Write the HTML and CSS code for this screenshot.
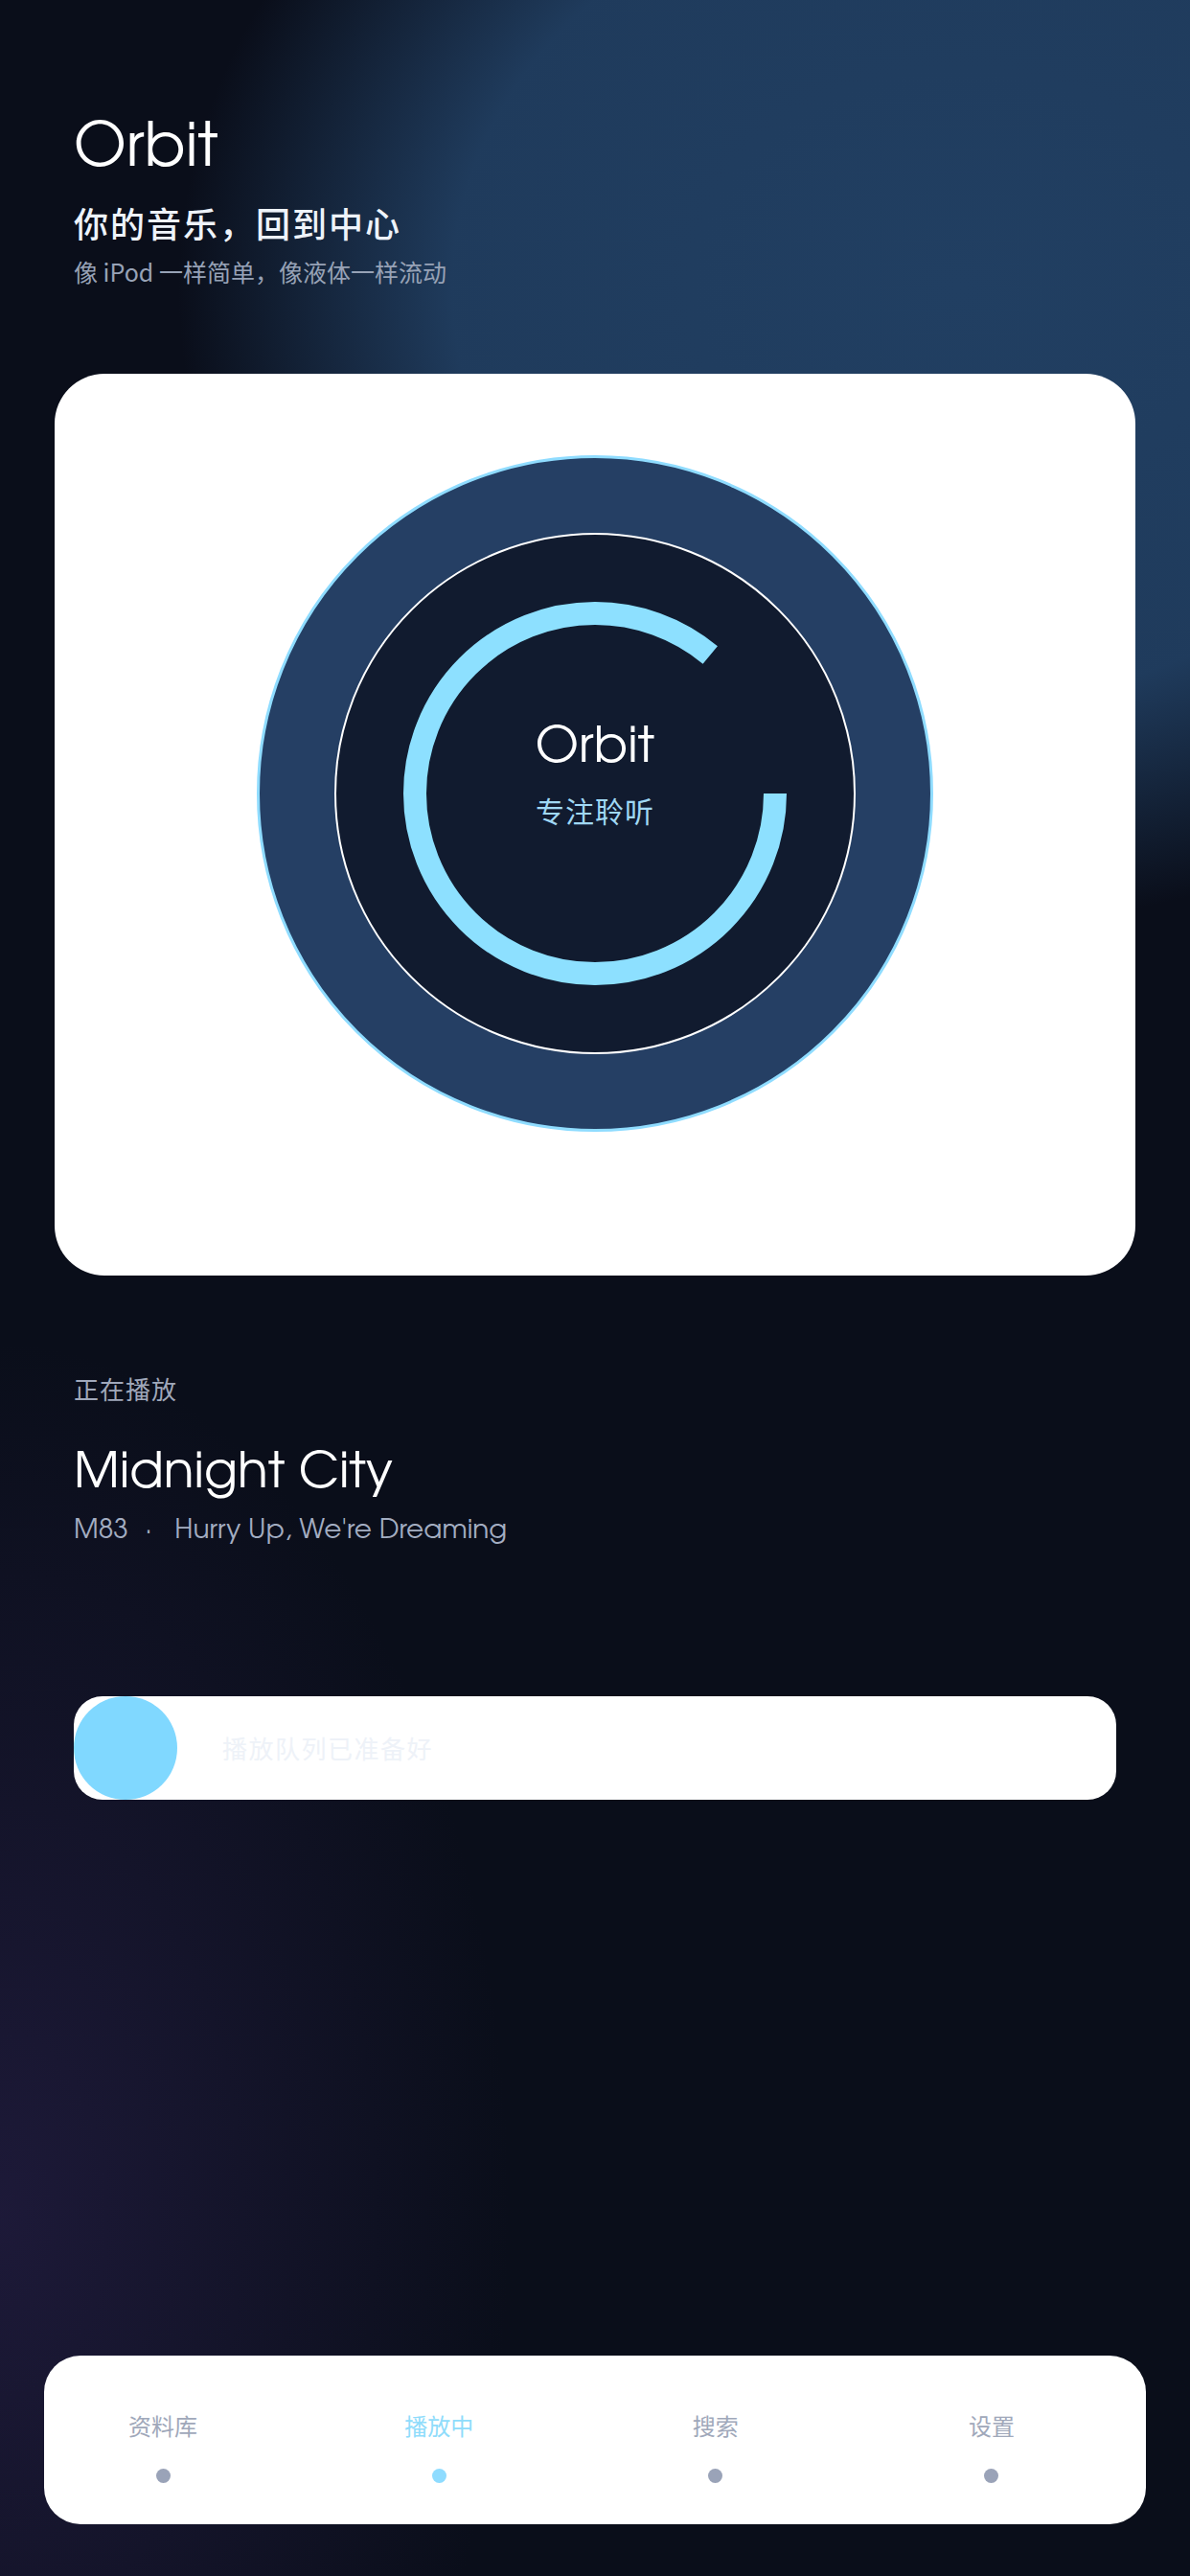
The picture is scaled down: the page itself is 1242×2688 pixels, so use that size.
FILE: index.html
```html
<!DOCTYPE html>
<html lang="zh-CN">
<head>
  <meta charset="UTF-8" />
  <meta name="viewport" content="width=device-width, initial-scale=1" />
  <title>Orbit</title>
  <link rel="stylesheet" href="styles.css">
</head>
<body>
  <div class="app">
    <header class="hero">
      <h1 class="brand">Orbit</h1>
      <p class="headline">你的音乐，回到中心</p>
      <p class="tagline">像 iPod 一样简单，像液体一样流动</p>
    </header>

    <section class="stage">
      <div class="disc">
        <svg class="disc-art" width="706" height="706" viewBox="0 0 706 706">
          <circle cx="353" cy="353" r="351.5" fill="#253f64" stroke="#8fdcff" stroke-width="3" />
          <circle cx="353" cy="353" r="271" fill="#111b2f" stroke="#ffffff" stroke-width="2" />
          <circle cx="353" cy="353" r="188" fill="none" stroke="#8de0ff" stroke-width="24"
                  stroke-dasharray="1016 166" />
        </svg>
        <div class="disc-label">
          <span class="disc-title">Orbit</span>
          <span class="disc-sub">专注聆听</span>
        </div>
      </div>
    </section>

    <section class="now">
      <p class="now-label">正在播放</p>
      <h2 class="track">Midnight City</h2>
      <p class="meta"><span>M83</span><span class="sep">·</span><span>Hurry Up, We're Dreaming</span></p>
    </section>

    <div class="queue">
      <span class="queue-knob"></span>
      <span class="queue-text">播放队列已准备好</span>
    </div>

    <nav class="tabs">
      <a class="tab">资料库<i class="dot"></i></a>
      <a class="tab active">播放中<i class="dot"></i></a>
      <a class="tab">搜索<i class="dot"></i></a>
      <a class="tab">设置<i class="dot"></i></a>
    </nav>
  </div>
</body>
</html>
```

FILE: styles.css
```css
* {
  box-sizing: border-box;
}
html, body {
  margin: 0;
  padding: 0;
}
body {
  font-family: "URW Gothic", "TeX Gyre Adventor", "Century Gothic", "Noto Sans CJK SC", sans-serif;
  color: #fff;
  background:
    radial-gradient(ellipse 1100px 900px at 1000px 300px, rgba(33, 63, 98, 1) 0%, rgba(33, 63, 98, 0.92) 48%, rgba(33, 63, 98, 0) 74%),
    radial-gradient(ellipse 760px 1300px at 0% 86%, rgba(30, 26, 58, 0.95), rgba(30, 26, 58, 0) 70%),
    #0a0e1a;
  min-height: 2688px;
}
.app {
  min-height: 2688px;
  display: flex;
  flex-direction: column;
  padding: 0 57px 54px;
}

.hero {
  padding: 124px 20px 0;
}
.brand {
  margin: 0;
  font-size: 63px;
  font-weight: 400;
  line-height: 1;
}
.headline {
  margin: 24px 0 0;
  font-family: "Noto Sans CJK SC", sans-serif;
  font-size: 36px;
  font-weight: 500;
  letter-spacing: 2px;
  line-height: 1.2;
  color: #eef3fa;
}
.tagline {
  margin: 13px 0 0;
  font-family: "URW Gothic", "Noto Sans CJK SC", sans-serif;
  font-size: 25px;
  line-height: 1.3;
  color: #97a2b6;
}

.stage {
  margin-top: 90px;
  background: #fff;
  border-radius: 52px;
  padding: 85px 0 150px;
  display: flex;
  justify-content: center;
}
.disc {
  position: relative;
  width: 706px;
  height: 706px;
}
.disc-art {
  display: block;
}
.disc-label {
  position: absolute;
  inset: 0;
  display: flex;
  flex-direction: column;
  align-items: center;
  justify-content: center;
  padding-bottom: 40px;
}
.disc-title {
  font-size: 52px;
  line-height: 1.2;
}
.disc-sub {
  margin-top: 14px;
  font-family: "Noto Sans CJK SC", sans-serif;
  font-size: 30px;
  letter-spacing: 1px;
  line-height: 1.3;
  color: #a0d8f4;
}

.now {
  padding: 0 20px;
  margin-top: 100px;
}
.now-label {
  margin: 0;
  font-family: "Noto Sans CJK SC", sans-serif;
  font-size: 26px;
  letter-spacing: 1px;
  line-height: 1.4;
  color: #a0a8ba;
}
.track {
  margin: 40px 0 0;
  font-size: 52px;
  font-weight: 400;
  line-height: 1.2;
}
.meta {
  margin: 10px 0 0;
  font-size: 28px;
  line-height: 1.3;
  color: #a3adc1;
}
.meta .sep {
  margin: 0 24px 0 18px;
}

.queue {
  margin: 154px 20px 0;
  height: 108px;
  background: #fff;
  border-radius: 30px;
  display: flex;
  align-items: center;
}
.queue-knob {
  width: 108px;
  height: 108px;
  border-radius: 50%;
  background: #80d8ff;
  flex: none;
}
.queue-text {
  margin-left: 47px;
  font-family: "Noto Sans CJK SC", sans-serif;
  font-size: 26px;
  letter-spacing: 1.5px;
  color: #eef2f8;
}

.tabs {
  margin-top: auto;
  margin-left: -11px;
  margin-right: -11px;
  background: #fff;
  border-radius: 38px;
  display: flex;
  justify-content: space-between;
  padding: 56px 113px 43px 76px;
}
.tab {
  width: 96px;
  display: flex;
  flex-direction: column;
  align-items: center;
  font-family: "Noto Sans CJK SC", sans-serif;
  font-size: 24px;
  line-height: 34px;
  color: #a0a8ba;
}
.tab.active {
  color: #8fdcfb;
}
.dot {
  margin-top: 28px;
  width: 15px;
  height: 15px;
  border-radius: 50%;
  background: #9aa3b8;
}
.tab.active .dot {
  background: #8fdcff;
}
```
